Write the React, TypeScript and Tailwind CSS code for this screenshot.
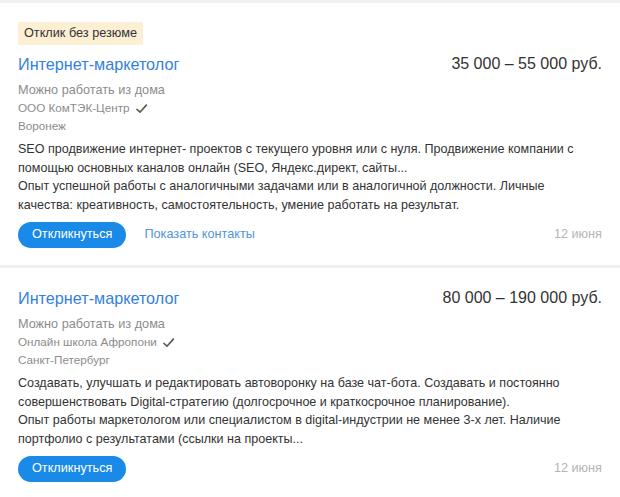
import React from 'react';

interface Vacancy {
  id: number;
  badge?: string;
  title: string;
  salary: string;
  remote: string;
  company: string;
  city: string;
  lines: string[];
  showContacts: boolean;
  date: string;
}

const vacancies: Vacancy[] = [
  {
    id: 1,
    badge: 'Отклик без резюме',
    title: 'Интернет-маркетолог',
    salary: '35 000 – 55 000 руб.',
    remote: 'Можно работать из дома',
    company: 'ООО КомТЭК-Центр',
    city: 'Воронеж',
    lines: [
      'SEO продвижение интернет- проектов с текущего уровня или с нуля. Продвижение компании с',
      'помощью основных каналов онлайн (SEO, Яндекс.директ, сайты...',
      'Опыт успешной работы с аналогичными задачами или в аналогичной должности. Личные',
      'качества: креативность, самостоятельность, умение работать на результат.',
    ],
    showContacts: true,
    date: '12 июня',
  },
  {
    id: 2,
    title: 'Интернет-маркетолог',
    salary: '80 000 – 190 000 руб.',
    remote: 'Можно работать из дома',
    company: 'Онлайн школа Афропони',
    city: 'Санкт-Петербург',
    lines: [
      'Создавать, улучшать и редактировать автоворонку на базе чат-бота. Создавать и постоянно',
      'совершенствовать Digital-стратегию (долгосрочное и краткосрочное планирование).',
      'Опыт работы маркетологом или специалистом в digital-индустрии не менее 3-х лет. Наличие',
      'портфолио с результатами (ссылки на проекты...',
    ],
    showContacts: false,
    date: '12 июня',
  },
];

function CheckMark() {
  return (
    <svg width="13" height="11" viewBox="0 0 13 11" className="ml-[5px] inline-block">
      <path d="M1.5 6 L5 9.2 L11.8 1.6" fill="none" stroke="#555" strokeWidth="1.6" />
    </svg>
  );
}

// one vacancy card in the search list
function VacancyCard({ v }: { v: Vacancy }) {
  return (
    <div className={`bg-white px-[18px] pb-[17px] ${v.badge ? 'pt-[17px]' : 'pt-[19px]'}`}>
      {v.badge && (
        <div className="mb-[8px] inline-block bg-[#fcefd3] px-[6px] text-[12.7px] leading-[23px] text-[#333]">
          {v.badge}
        </div>
      )}

      <div className="flex items-center justify-between">
        <a className="text-[16.2px] leading-[22px] text-[#3381de]">{v.title}</a>
        <span className="text-[16px] leading-[22px] text-[#333]">{v.salary}</span>
      </div>

      <div className="mt-[6px] text-[12.7px] leading-[18px] text-[#8c8c8c]">{v.remote}</div>
      <div className="flex items-center text-[11.7px] leading-[18px] text-[#8c8c8c]">
        {v.company}
        <CheckMark />
      </div>
      <div className="text-[11.7px] leading-[18px] text-[#8c8c8c]">{v.city}</div>

      <div className="mt-[5px] text-[12.55px] leading-[18.5px] text-[#333]">
        {v.lines.map((l, i) => (
          <div key={i} className="whitespace-nowrap">{l}</div>
        ))}
      </div>

      <div className="mt-[8px] flex items-center">
        <button className="h-[26px] rounded-full bg-[#1a8ae8] px-[14px] text-[12.7px] text-white">
          Откликнуться
        </button>
        {v.showContacts && (
          <a className="ml-[18px] text-[12.7px] text-[#4f95dc]">Показать контакты</a>
        )}
        <span className="ml-auto text-[12.7px] text-[#b5b5b5]">{v.date}</span>
      </div>
    </div>
  );
}

export default function App() {
  return (
    <div
      className="w-[620px] h-[497px] overflow-hidden bg-[#f0f0f0] pt-[3px]"
      style={{ fontFamily: '"Liberation Sans", Arial, sans-serif' }}
    >
      <div className="flex flex-col gap-[3px]">
        {vacancies.map((v) => (
          <VacancyCard key={v.id} v={v} />
        ))}
      </div>
    </div>
  );
}
